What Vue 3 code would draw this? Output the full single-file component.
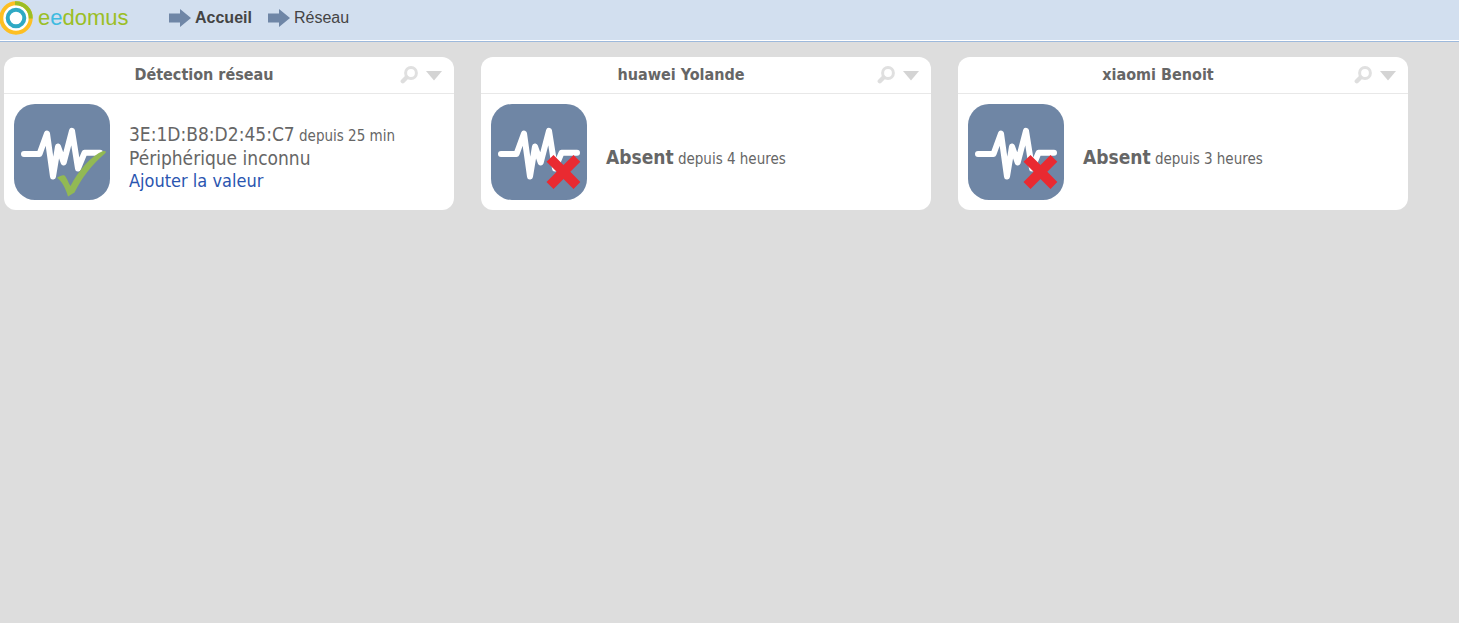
<script setup>
const crumbs = [
  { label: 'Accueil', home: true },
  { label: 'Réseau', home: false },
]

const devices = [
  {
    name: 'Détection réseau',
    value: '3E:1D:B8:D2:45:C7',
    since: 'depuis 25 min',
    detail: 'Périphérique inconnu',
    action: 'Ajouter la valeur',
    present: true,
  },
  { name: 'huawei Yolande', value: 'Absent', since: 'depuis 4 heures', present: false },
  { name: 'xiaomi Benoit', value: 'Absent', since: 'depuis 3 heures', present: false },
]
</script>

<template>
  <header class="topbar">
    <a class="brand" href="#" aria-label="eedomus">
      <svg class="brand-mark" viewBox="0 0 34 36" aria-hidden="true">
        <circle cx="16" cy="18" r="15" fill="#fff" />
        <circle cx="16" cy="18" r="14.7" fill="none" stroke="#fdbf23" stroke-width="4" />
        <path d="M15 3.3A14.7 14.7 0 0 1 30.7 18.5" fill="none" stroke="#9bbe25" stroke-width="4" />
        <circle cx="16" cy="18" r="8.3" fill="#fff" stroke="#2fa9c4" stroke-width="4" />
      </svg>
      <span class="brand-name">e<span class="brand-accent">e</span>domus</span>
    </a>
    <nav class="crumbs">
      <a v-for="crumb in crumbs" :key="crumb.label" href="#" class="crumb" :class="{ home: crumb.home }">
        <svg class="arrow" viewBox="0 0 22 18" aria-hidden="true">
          <path d="M0 4.5H11V0L22 9L11 18V13.5H0Z" fill="#6f86a6" />
        </svg>
        <span>{{ crumb.label }}</span>
      </a>
    </nav>
  </header>

  <main class="devices">
    <article v-for="device in devices" :key="device.name" class="card">
      <div class="card-head">
        <h2 class="card-title">{{ device.name }}</h2>
        <div class="actions">
          <button type="button" aria-label="Détails">
            <svg class="tool" viewBox="0 0 18 18" aria-hidden="true">
              <circle cx="11" cy="7" r="5.4" fill="none" stroke="#e0e0e0" stroke-width="3" />
              <path d="M6.500 11.500L2.800 15.200" stroke="#dedede" stroke-width="4.400" stroke-linecap="round" />
            </svg>
          </button>
          <button type="button" aria-label="Menu">
            <svg class="tool" viewBox="0 0 18 18" aria-hidden="true">
              <path d="M1 5H17L9 14.500Z" fill="#d4d4d4" />
            </svg>
          </button>
        </div>
      </div>
      <div class="card-body">
        <svg class="tile" viewBox="0 0 96 96" aria-hidden="true">
          <rect width="96" height="96" rx="21" fill="#6f86a5" />
          <path
            d="M10 50H25.5L33 29.5L39 72.5L44 42.5L49.7 58.5L58 26.8L64 64.5L70.5 48.8H86"
            fill="none" stroke="#fff" stroke-width="6" stroke-linecap="round" stroke-linejoin="round"
          />
          <path
            v-if="device.present"
            d="M43 73.800C46 71.800 49 70.500 50.500 71.500C52.500 73 54 78 56.500 82C64 67 77 52 89 47Q93.500 46.500 91 49.500C78 60 67 75 60.500 88.500L54 92.500C51.500 84 48 77.500 43 73.800Z"
            fill="#92b954"
          />
          <path
            v-else
            d="M62.500 51L72.500 61L82.500 51L89.300 57.800L79.300 67.800L89.300 78L82.500 85L72.500 75L62.500 85L55.500 78L65.700 67.800L55.500 57.800Z"
            fill="#e92a31"
          />
        </svg>
        <div class="state">
          <div class="line">
            <component :is="device.present ? 'span' : 'strong'" class="value">{{ device.value }}</component>
            <span class="since">{{ ' ' + device.since }}</span>
          </div>
          <div v-if="device.detail" class="line">{{ device.detail }}</div>
          <a v-if="device.action" class="add" href="#">{{ device.action }}</a>
        </div>
      </div>
    </article>
  </main>
</template>

<style>
html,
body {
  background: #ddd;
}
</style>

<style scoped>
.topbar {
  display: flex;
  align-items: center;
  box-sizing: border-box;
  height: 42px;
  padding-bottom: 5px;
  background: #d2dfef;
  border-bottom: 1px solid #9db9dc;
  box-shadow: inset 0 -1px #fff;
  font-family: "Liberation Sans", Arial, sans-serif;
}

a {
  text-decoration: none;
}

.brand {
  display: flex;
  align-items: center;
  width: 169px;
  gap: 4px;
}

.brand-mark {
  width: 34px;
  height: 36px;
}

.brand-name {
  color: #9bbe25;
  font-size: 22px;
  line-height: 36px;
}

.brand-accent {
  color: #3fbbe0;
}

.crumbs {
  display: flex;
  gap: 16px;
}

.crumb {
  display: flex;
  align-items: center;
  gap: 4px;
  color: #444;
  font-size: 16px;
  line-height: 20px;
}

.home {
  font-weight: bold;
}

.arrow {
  width: 22px;
  height: 18px;
}

.devices {
  display: grid;
  grid-template-columns: repeat(3, 1fr);
  gap: 27px;
  padding: 15px 51px 15px 4px;
  color: #666;
  font-family: "DejaVu Sans Condensed", Tahoma, "Noto Sans", sans-serif;
}

.card {
  background: #fff;
  border-radius: 12px;
}

.card-head {
  display: flex;
  align-items: center;
  height: 36px;
  padding: 0 8px;
  border-bottom: 1px solid #e8e8e8;
}

.card-title {
  flex: 1;
  margin: 0;
  font-size: 16px;
  font-weight: bold;
  line-height: 36px;
  text-align: center;
}

.actions {
  display: flex;
}

button {
  display: flex;
  justify-content: center;
  width: 25px;
  padding: 0;
  border: 0;
  background: none;
}

.tool {
  width: 18px;
  height: 18px;
}

.card-body {
  display: flex;
  align-items: center;
  gap: 19px;
  padding: 10px;
}

.tile {
  flex: none;
  width: 96px;
  height: 96px;
}

.state {
  padding-top: 10px;
  font-size: 19px;
  line-height: 24px;
}

.since {
  font-size: 15px;
  line-height: 15px;
  white-space: pre;
}

.add {
  display: block;
  color: #2a55b0;
  font-size: 18px;
  line-height: 22px;
}
</style>
